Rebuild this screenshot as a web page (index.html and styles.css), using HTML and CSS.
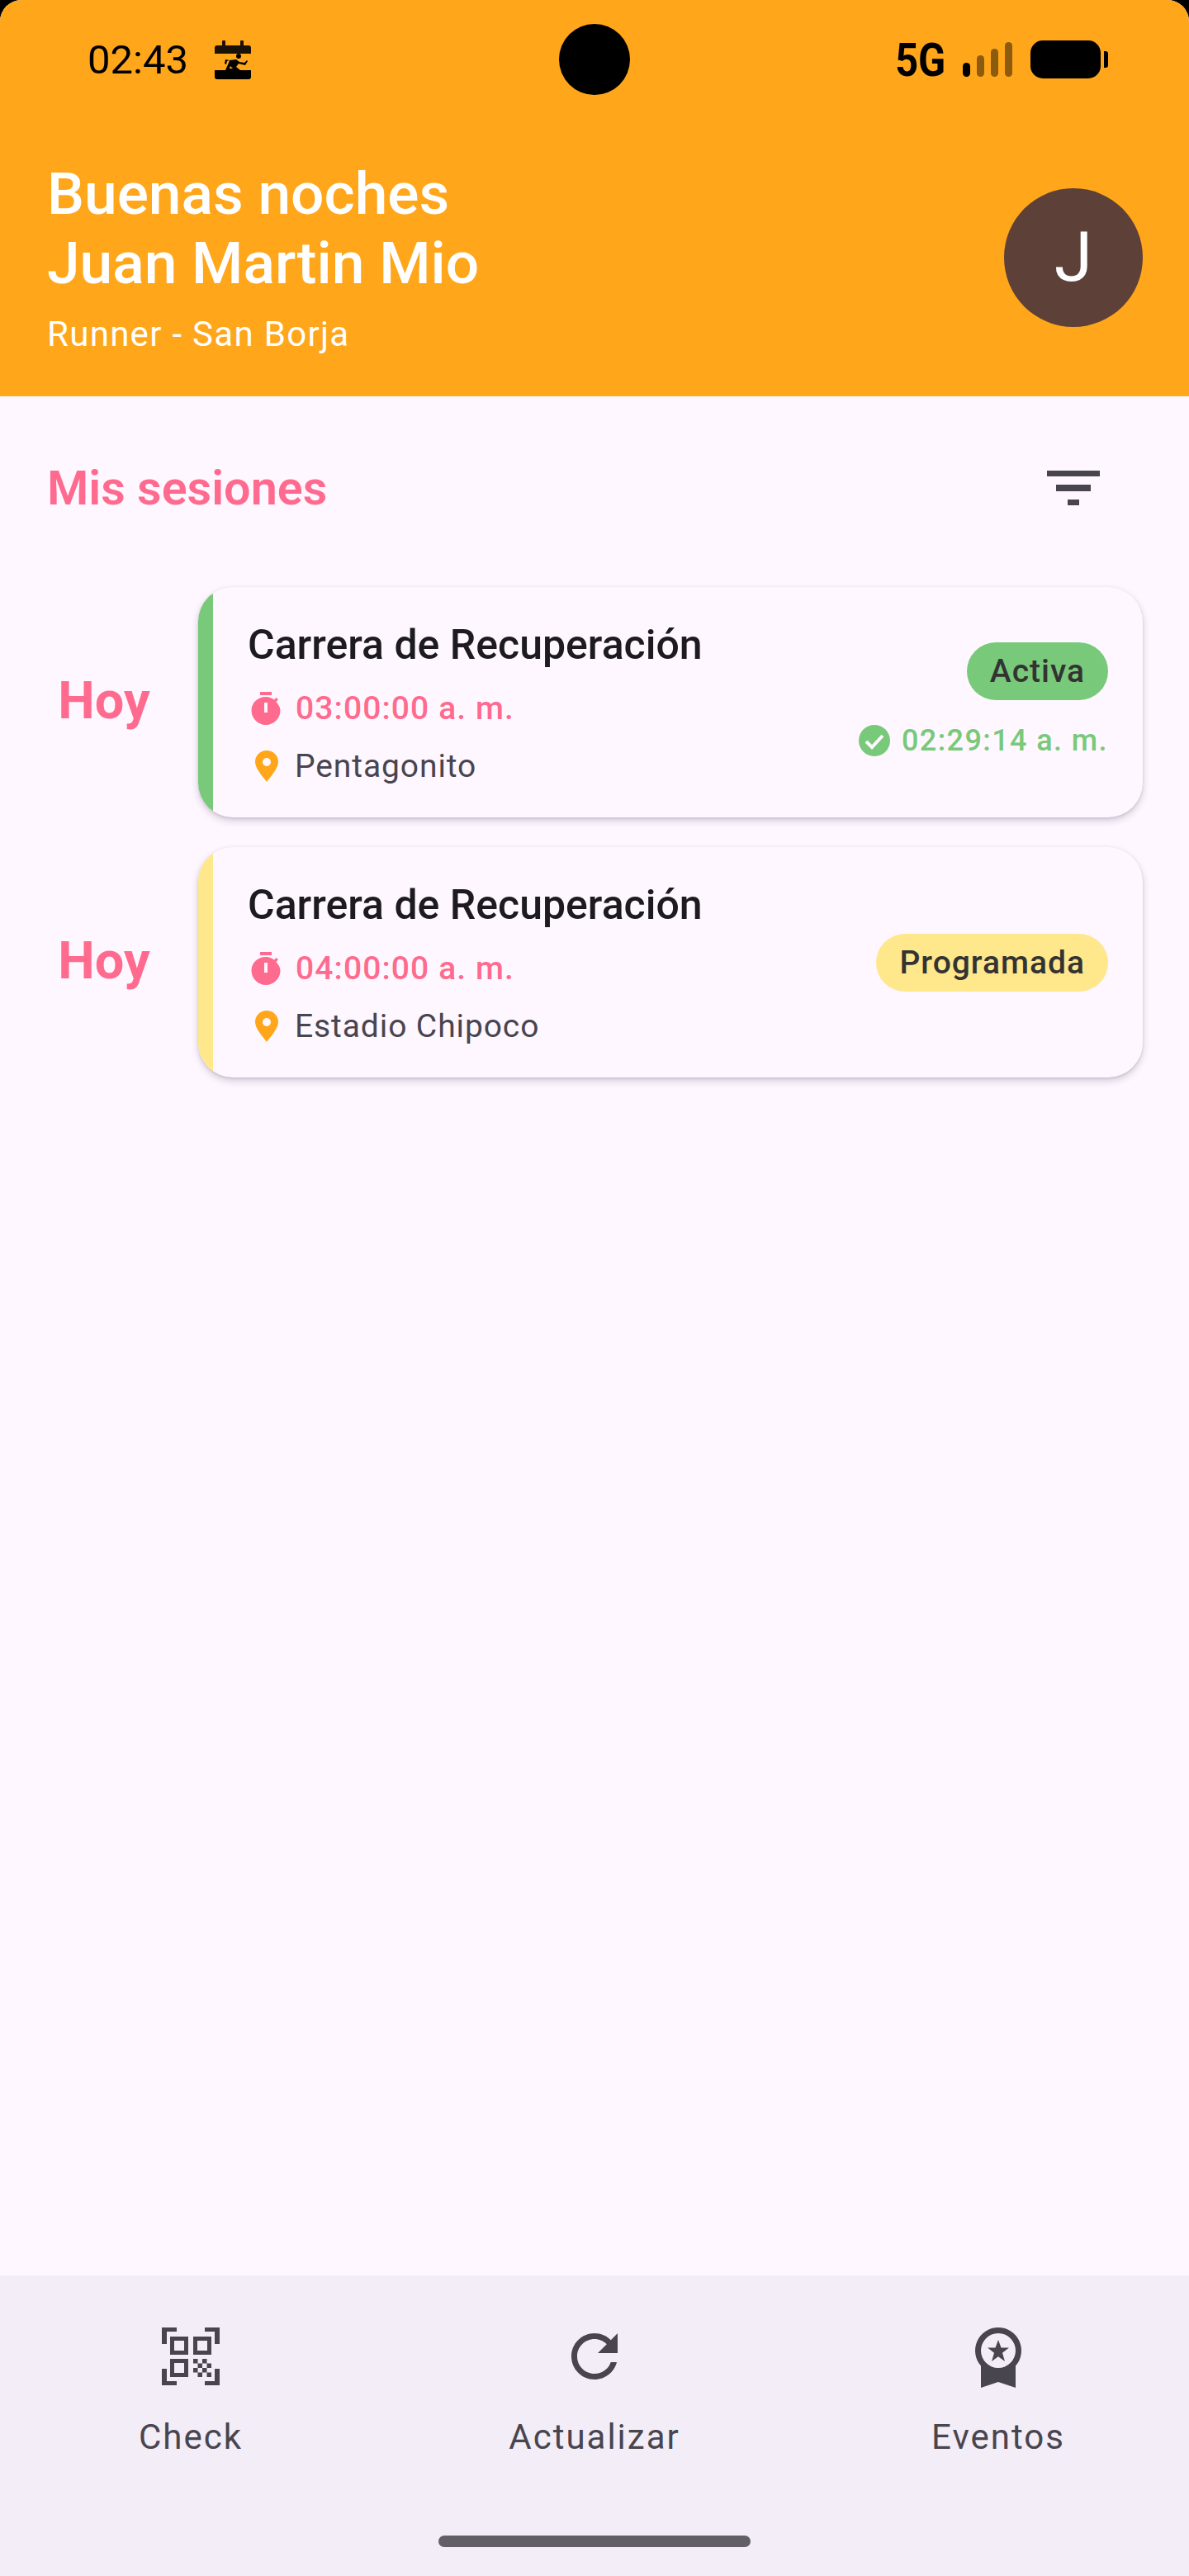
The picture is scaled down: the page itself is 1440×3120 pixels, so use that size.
FILE: index.html
```html
<!DOCTYPE html>
<html lang="es">
<head>
  <meta charset="UTF-8">
  <meta name="viewport" content="width=device-width, initial-scale=1.0">
  <title>Mis sesiones</title>
  <link rel="stylesheet" href="styles.css">
</head>
<body>

<div class="screen">
  <header class="top">
    <div class="status">
      <div class="status-left">
        <span class="clock">02:43</span>
        <svg class="cal-icon" viewBox="0 0 44 47" width="44" height="47">
          <path d="M3 6h6V1.500a2 2 0 0 1 4 0V6h18V1.500a2 2 0 0 1 4 0V6h6a3 3 0 0 1 3 3v7H0V9a3 3 0 0 1 3-3z" fill="#1a1206"/>
          <path d="M0 36h44v8a3 3 0 0 1-3 3H3a3 3 0 0 1-3-3z" fill="#000"/>
          <circle cx="29" cy="19" r="3" fill="#000"/>
          <path d="M18 24l8-1 4 3 6 1 3-3 1 1-3 5-8-2-3 4 5 4-2 1H15l2-3h5l-3-3-2 5h-4l4-9 1-3-3 1-1 4-2-1 1-5z" fill="#000"/>
        </svg>
      </div>
      <div class="camera"></div>
      <div class="status-right">
        <span class="net">5G</span>
        <div class="signal">
          <i class="bar bar-1"></i>
          <i class="bar bar-2"></i>
          <i class="bar bar-3"></i>
          <i class="bar bar-4"></i>
        </div>
        <div class="battery"></div>
      </div>
    </div>
    <div class="greeting">
      <div>
        <h1>Buenas noches<br>Juan Martin Mio</h1>
        <p>Runner - San Borja</p>
      </div>
      <div class="avatar">J</div>
    </div>
  </header>

  <main class="content">
    <div class="content-head">
      <h2>Mis sesiones</h2>
      <svg class="filter-icon" viewBox="0 0 64 42" width="64" height="42">
        <path d="M0 0h64v7H0zM11 17h42v8H11zM25 35h14v7H25z" fill="#49454f"/>
      </svg>
    </div>

    <div class="session">
      <div class="day">Hoy</div>
      <article class="card">
        <div class="card-bar bar-active"></div>
        <div class="card-body">
          <div class="card-info">
            <h3>Carrera de Recuperación</h3>
            <div class="meta meta-time">
              <svg viewBox="0 0 36 40" width="36" height="40"><path d="M11 0h14v4H11zM18 6c3.800 0 7.300 1.300 10 3.500l2.600-2.600 2.400 2.400-2.600 2.600C32.700 14.700 35.500 18 35.500 22.500 35.500 32 27.700 40 18 40S.5 32 .5 22.500 8.300 6 18 6zM16 13v12h4V13z" fill="#ff6b8e" fill-rule="evenodd"/></svg>
              <span>03:00:00 a. m.</span>
            </div>
            <div class="meta meta-place">
              <svg viewBox="0 0 28 38" width="28" height="38"><path d="M14 0C6.300 0 0 6 0 13.500 0 22 9 31 14 38c5-7 14-16 14-24.500C28 6 21.700 0 14 0zm0 9a5 5 0 1 1 0 10 5 5 0 0 1 0-10z" fill="#ffa61a" fill-rule="evenodd"/></svg>
              <span>Pentagonito</span>
            </div>
          </div>
          <div class="card-side">
            <span class="badge badge-active">Activa</span>
            <div class="checkin">
              <svg viewBox="0 0 38 38" width="38" height="38"><circle cx="19" cy="19" r="19" fill="#78c97a"/><path d="M9 20l7 7 13-14" fill="none" stroke="#fef7ff" stroke-width="4"/></svg>
              <span>02:29:14 a. m.</span>
            </div>
          </div>
        </div>
      </article>
    </div>

    <div class="session">
      <div class="day">Hoy</div>
      <article class="card">
        <div class="card-bar bar-scheduled"></div>
        <div class="card-body">
          <div class="card-info">
            <h3>Carrera de Recuperación</h3>
            <div class="meta meta-time">
              <svg viewBox="0 0 36 40" width="36" height="40"><path d="M11 0h14v4H11zM18 6c3.800 0 7.300 1.300 10 3.500l2.600-2.600 2.400 2.400-2.600 2.600C32.700 14.700 35.500 18 35.500 22.500 35.500 32 27.700 40 18 40S.5 32 .5 22.500 8.300 6 18 6zM16 13v12h4V13z" fill="#ff6b8e" fill-rule="evenodd"/></svg>
              <span>04:00:00 a. m.</span>
            </div>
            <div class="meta meta-place">
              <svg viewBox="0 0 28 38" width="28" height="38"><path d="M14 0C6.300 0 0 6 0 13.500 0 22 9 31 14 38c5-7 14-16 14-24.500C28 6 21.700 0 14 0zm0 9a5 5 0 1 1 0 10 5 5 0 0 1 0-10z" fill="#ffa61a" fill-rule="evenodd"/></svg>
              <span>Estadio Chipoco</span>
            </div>
          </div>
          <div class="card-side">
            <span class="badge badge-scheduled">Programada</span>
          </div>
        </div>
      </article>
    </div>
  </main>

  <nav class="tabs">
    <div class="tab">
      <svg viewBox="0 0 70 74" width="70" height="74">
        <path d="M0 0h18v5H6v15H0zM52 0h18v20h-6V5H52zM0 50h6v15h12v5H0zM64 50h6v20H52v-5h12z" fill="#49454f"/>
        <path d="M10 11h22v22H10zM15 16v12h12V16zM38 11h22v22H38zM43 16v12h12V16zM10 38h22v22H10zM15 43v12h12V43z" fill="#49454f" fill-rule="evenodd"/>
        <path d="M38 38h5.500v5.500H38zM49 38h5.500v5.500H49zM43.500 43.500H49V49h-5.500zM54.500 43.500H60V49h-5.500zM38 49h5.500v5.500H38zM49 49h5.500v5.500H49zM43.500 54.500H49V60h-5.500zM54.500 54.500H60V60h-5.500z" fill="#49454f"/>
      </svg>
      <span>Check</span>
    </div>
    <div class="tab">
      <svg viewBox="0 0 70 74" width="70" height="74">
        <path d="M35 7C19.500 7 7 19.500 7 35s12.500 28 28 28c13 0 24-9 27-21h-7.300C52 50.300 44.200 56 35 56 23.400 56 14 46.600 14 35S23.400 14 35 14c5.800 0 11 2.400 14.800 6.200L39 31h24V7l-8.200 8.200C49.700 10.100 42.700 7 35 7z" fill="#49454f"/>
      </svg>
      <span>Actualizar</span>
    </div>
    <div class="tab">
      <svg viewBox="0 0 70 74" width="70" height="74">
        <path d="M35 0a28 28 0 0 1 21 46.500V73L35 66 14 73V46.500A28 28 0 0 1 35 0zm0 7a21 21 0 1 0 0 42 21 21 0 0 0 0-42z" fill="#49454f" fill-rule="evenodd"/>
        <path d="M35 15l3.500 9.500H48l-8 6.300 3 10.200-8-5.800-8 5.800 3-10.200-8-6.300h9.500z" fill="#49454f"/>
      </svg>
      <span>Eventos</span>
    </div>
    <div class="home-bar"></div>
  </nav>
</div>

</body>
</html>
```

FILE: styles.css
```css
* {
  box-sizing: border-box;
}
html {
  background: #000;
}
body {
  margin: 0;
  font-family: Roboto, "Liberation Sans", sans-serif;
  color: #1d1b20;
}
h1, h2, h3, p {
  margin: 0;
}
.screen {
  width: 1440px;
  height: 3120px;
  display: flex;
  flex-direction: column;
  background: #fef7ff;
  border-radius: 26px 26px 0 0;
  overflow: hidden;
}

/* top orange area */
.top {
  height: 480px;
  flex: none;
  background: #ffa61a;
}
.status {
  height: 144px;
  padding: 49px 107px 0 106px;
  display: grid;
  grid-template-columns: 1fr 1fr;
  position: relative;
}
.status-left {
  display: flex;
  align-items: flex-start;
  gap: 32px;
}
.clock {
  font-size: 49px;
  line-height: 47px;
  color: #000;
}
.cal-icon {
  display: block;
}
.camera {
  position: absolute;
  left: 677px;
  top: 29px;
  width: 86px;
  height: 86px;
  border-radius: 50%;
  background: #000;
}
.status-right {
  display: flex;
  justify-content: flex-end;
  align-items: flex-start;
}
.net {
  font-weight: 700;
  font-size: 56px;
  line-height: 46px;
  margin-top: 1px;
  margin-right: 21px;
  color: #000;
  transform: scaleX(.87);
  transform-origin: right center;
}
.signal {
  display: flex;
  align-items: flex-end;
  gap: 8px;
  height: 42px;
  margin-top: 2px;
  margin-right: 22px;
}
.bar {
  width: 9px;
  border-radius: 5px;
  background: rgba(0, 0, 0, .45);
}
.bar-1 {
  height: 17px;
  background: #000;
}
.bar-2 {
  height: 26px;
}
.bar-3 {
  height: 34px;
}
.bar-4 {
  height: 42px;
}
.battery {
  width: 85px;
  height: 46px;
  border-radius: 15px;
  background: #000;
  position: relative;
}
.battery::after {
  content: "";
  position: absolute;
  left: 89px;
  top: 13px;
  width: 5px;
  height: 20px;
  border-radius: 0 3px 3px 0;
  background: #000;
}
.greeting {
  display: flex;
  justify-content: space-between;
  padding: 50px 56px 0 57px;
}
.greeting h1 {
  font-size: 71.3px;
  line-height: 84px;
  font-weight: 500;
  color: #fff;
  margin-top: -1px;
}
.greeting p {
  font-size: 42px;
  line-height: 56px;
  color: #fff;
  margin-top: 16px;
  letter-spacing: 1.3px;
}
.avatar {
  width: 168px;
  height: 168px;
  margin-top: 34px;
  border-radius: 50%;
  background: #5d4037;
  color: #fff;
  font-size: 84px;
  line-height: 168px;
  text-align: center;
}

/* session list */
.content {
  flex: 1;
  padding: 0 56px 0 0;
}
.content-head {
  display: flex;
  justify-content: space-between;
  align-items: center;
  height: 222px;
  padding: 0 52px 0 57px;
  margin-bottom: 9px;
}
.content-head h2 {
  font-size: 57.5px;
  font-weight: 600;
  color: #ff6b8e;
}
.filter-icon {
  display: block;
}
.session {
  display: flex;
  align-items: center;
  margin-bottom: 36px;
}
.day {
  width: 240px;
  padding-left: 12px;
  text-align: center;
  font-size: 63px;
  font-weight: 700;
  color: #ff6b8e;
  margin-top: -4px;
}
.card {
  flex: 1;
  height: 279px;
  display: flex;
  border-radius: 42px;
  background: #fef7ff;
  box-shadow: 0 4px 9px rgba(60, 40, 70, .22), 0 1px 3px rgba(60, 40, 70, .12);
  overflow: hidden;
}
.card-bar {
  width: 18px;
  flex: none;
}
.bar-active {
  background: #78c97a;
}
.bar-scheduled {
  background: #ffe78c;
}
.card-body {
  flex: 1;
  display: flex;
  justify-content: space-between;
  align-items: center;
  padding: 0 42px;
}
.card-info {
  padding-top: 12px;
}
.card-info h3 {
  font-size: 50px;
  line-height: 60px;
  font-weight: 500;
  color: #1d1b20;
  margin-bottom: 12px;
}
.meta {
  display: flex;
  align-items: center;
  height: 70px;
  font-size: 39px;
}
.meta svg {
  flex: none;
}
.meta-time {
  gap: 18px;
  padding-left: 4px;
  color: #ff6b8e;
  font-weight: 500;
  letter-spacing: 1.1px;
}
.meta-place {
  gap: 20px;
  padding-left: 9px;
  color: #49454f;
  letter-spacing: .9px;
}
.card-side {
  display: flex;
  flex-direction: column;
  align-items: flex-end;
  gap: 28px;
}
.badge {
  height: 70px;
  padding: 0 28px;
  border-radius: 35px;
  font-size: 39px;
  line-height: 70px;
  font-weight: 500;
  letter-spacing: 1px;
  color: #333;
}
.badge-active {
  background: #78c97a;
}
.badge-scheduled {
  background: #ffe78c;
}
.checkin {
  display: flex;
  align-items: center;
  gap: 14px;
  margin-bottom: 6px;
  font-size: 36px;
  font-weight: 500;
  letter-spacing: 1.4px;
  color: #78c97a;
}

/* bottom nav */
.tabs {
  height: 364px;
  flex: none;
  display: grid;
  grid-template-columns: repeat(3, 462px);
  column-gap: 27px;
  background: #f3edf7;
  padding-top: 63px;
  position: relative;
}
.tab {
  display: flex;
  flex-direction: column;
  align-items: center;
  color: #49454f;
  font-size: 42px;
  letter-spacing: 2px;
}
.tab svg {
  display: block;
}
.tab span {
  margin-top: 34px;
}
.home-bar {
  position: absolute;
  left: 531px;
  top: 315px;
  width: 378px;
  height: 14px;
  border-radius: 7px;
  background: #625f66;
}
```
